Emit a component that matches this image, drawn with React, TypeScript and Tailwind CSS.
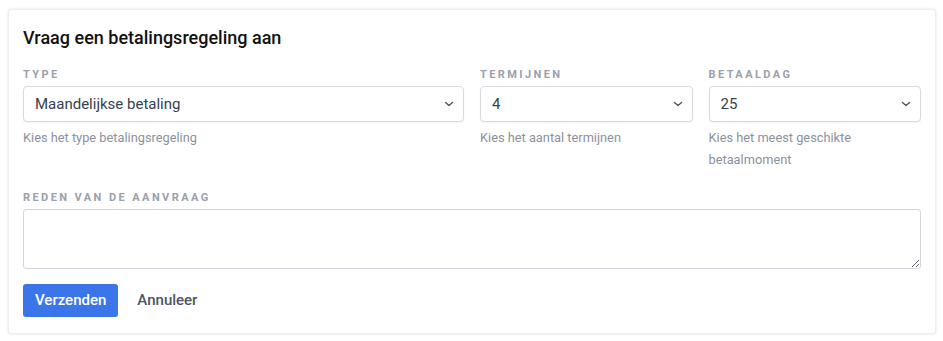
import React from "react";

const Chevron = () => (
  <svg width="10" height="6" viewBox="0 0 10 6" className="shrink-0">
    <path d="M1.5 1.5 L5 4.5 L8.5 1.5" fill="none" stroke="#4b5563" strokeWidth="1.4" strokeLinecap="round" strokeLinejoin="round" />
  </svg>
);

const Label = ({ children }: { children: React.ReactNode }) => (
  <div className="text-[11px] leading-[16px] font-bold uppercase tracking-[0.22em] text-[#9aa0ab] mb-[3px]">{children}</div>
);

const Select = ({ value }: { value: string }) => (
  <div className="h-[36px] flex items-center justify-between border border-[#d7dae0] rounded-[4px] pl-[11px] pr-[9px] shadow-[0_1px_2px_rgba(0,0,0,0.05)] bg-white">
    <span className="text-[15px] text-[#374151]">{value}</span>
    <Chevron />
  </div>
);

const Help = ({ children }: { children: React.ReactNode }) => (
  <div className="mt-[5px] text-[12.8px] leading-[22px] text-[#8b929e]">{children}</div>
);

export default function App() {
  return (
    <div className="pl-[8px] pr-[7px] pt-[9px] pb-[8px] bg-white" style={{ fontFamily: "Roboto, 'Liberation Sans', sans-serif" }}>
      <div className="rounded-[3px] bg-white shadow-[0_0_3px_rgba(0,0,0,0.12)] border border-[#eeeeee] px-[14px] pt-[14px] pb-[16px]">
        <h2 className="text-[18px] leading-[28px] font-medium text-[#111111] mb-[15px]">Vraag een betalingsregeling aan</h2>
        <div className="grid grid-cols-4 gap-x-[16px]">
          <div className="col-span-2">
            <Label>Type</Label>
            <Select value="Maandelijkse betaling" />
            <Help>Kies het type betalingsregeling</Help>
          </div>
          <div>
            <Label>Termijnen</Label>
            <Select value="4" />
            <Help>Kies het aantal termijnen</Help>
          </div>
          <div>
            <Label>Betaaldag</Label>
            <Select value="25" />
            <Help>Kies het meest geschikte betaalmoment</Help>
          </div>
        </div>
        <div className="mt-[19px]">
          <Label>Reden van de aanvraag</Label>
          <textarea className="block w-full h-[60px] border border-[#d2d5db] rounded-[3px] p-2 text-[14px]" />
        </div>
        <div className="mt-[15px] flex items-center gap-[19px]">
          <button className="h-[33px] px-[12px] rounded-[3px] bg-[#3b75ea] text-white text-[15px] font-medium">Verzenden</button>
          <button className="text-[15px] font-medium text-[#4b5563]">Annuleer</button>
        </div>
      </div>
    </div>
  );
}
